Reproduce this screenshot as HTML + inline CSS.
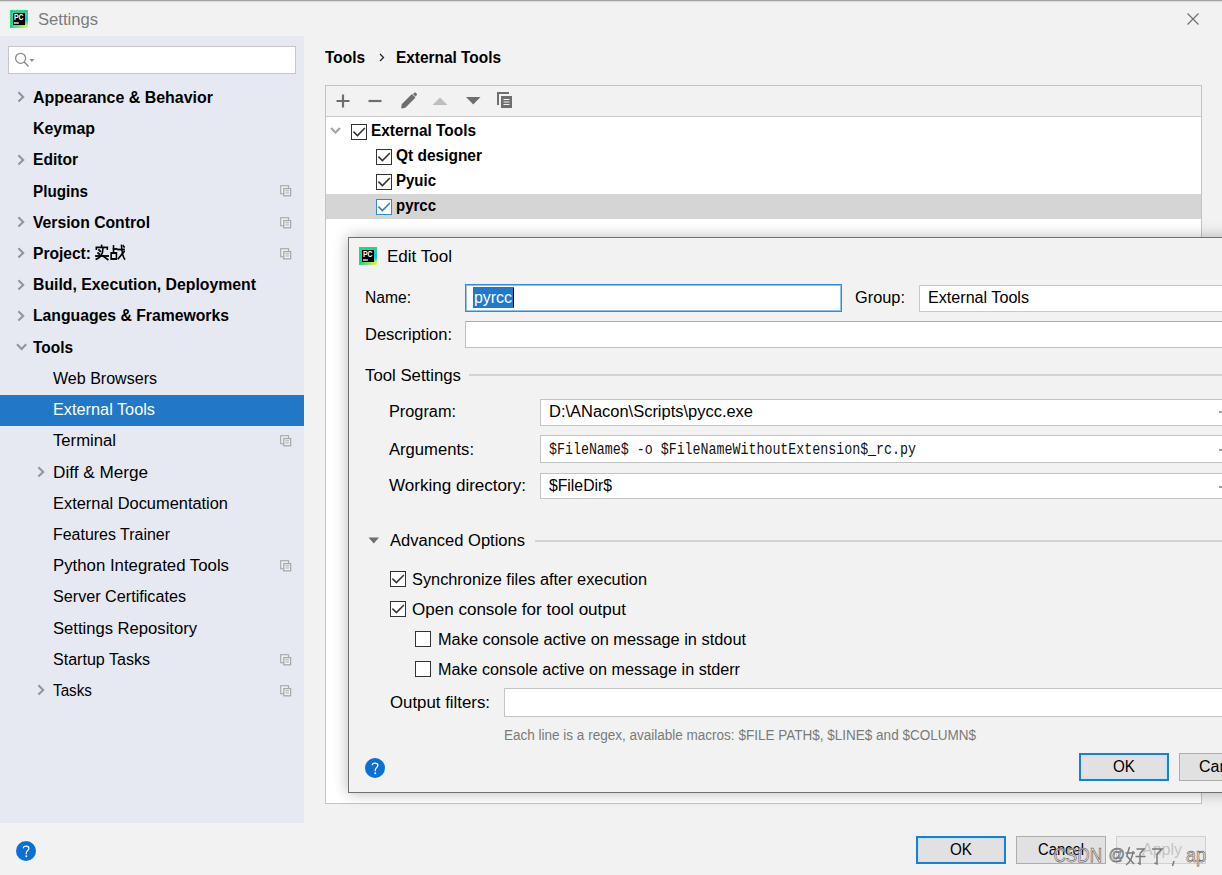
<!DOCTYPE html>
<html><head><meta charset="utf-8"><title>Settings</title>
<style>
html,body{margin:0;padding:0;}
body{width:1222px;height:875px;position:relative;overflow:hidden;background:#f2f2f2;font-family:'Liberation Sans', sans-serif;}
.t{position:absolute;white-space:pre;transform-origin:0 0;}
svg{position:absolute;overflow:visible;}
</style></head><body>
<div style="position:absolute;left:0px;top:0px;width:1222px;height:1px;background:#a3a3a3"></div>
<div style="position:absolute;left:0px;top:1px;width:1222px;height:1px;background:#dcdcdc"></div>
<svg style="left:10px;top:10px" width="18" height="18" viewBox="0 0 18 18">
<defs><linearGradient id="pcg10" x1="0" y1="0" x2="1" y2="1"><stop offset="0" stop-color="#21d789"/><stop offset="0.5" stop-color="#25d38a"/><stop offset="1" stop-color="#fcf84a"/></linearGradient>
<linearGradient id="pcc10" x1="0" y1="0" x2="0" y2="1"><stop offset="0" stop-color="#07c3f2" stop-opacity="0"/><stop offset="0.5" stop-color="#07c3f2"/><stop offset="0.85" stop-color="#07c3f2" stop-opacity="0"/></linearGradient></defs>
<rect x="0" y="0" width="18" height="18" fill="url(#pcg10)"/>
<rect x="14" y="0" width="4" height="18" fill="url(#pcc10)"/>
<rect x="3" y="3" width="12" height="12" fill="#000"/>
<text x="4" y="9.9" font-family="Liberation Sans" font-weight="bold" font-size="8.4" textLength="9.6" lengthAdjust="spacingAndGlyphs" fill="#fff">PC</text>
<rect x="4" y="12.2" width="4.8" height="1.6" fill="#cfcfcf"/>
</svg>
<div class="t" style="left:38px;top:10px;font-size:16px;line-height:20px;font-weight:normal;color:#7c7c7c;font-family:'Liberation Sans', sans-serif;transform:scaleX(1.0378);">Settings</div>
<svg style="left:1187px;top:13px" width="12" height="12"><path d="M0.5 0.5 L11.5 11.5 M11.5 0.5 L0.5 11.5" stroke="#707070" stroke-width="1.2" fill="none"/></svg>
<div style="position:absolute;left:0px;top:36px;width:304px;height:787px;background:#e6e9f2"></div>
<div style="position:absolute;left:8px;top:46px;width:288px;height:28px;background:#fff;border:1px solid #c6c6c6;box-sizing:border-box"></div>
<svg style="left:14px;top:52px" width="22" height="16"><circle cx="6.6" cy="6.3" r="5" stroke="#8a8a8a" stroke-width="1.3" fill="none"/><path d="M10.2 10 L14.6 14.6" stroke="#8a8a8a" stroke-width="1.5"/><path d="M15.5 7 L20.3 7 L17.9 10 Z" fill="#8a8a8a"/></svg>
<div style="position:absolute;left:0px;top:395px;width:304px;height:31px;background:#2178c6"></div>
<div class="t" style="left:33px;top:88px;font-size:16px;line-height:20px;font-weight:bold;color:#000;font-family:'Liberation Sans', sans-serif;transform:scaleX(0.9971);">Appearance &amp; Behavior</div>
<svg style="left:16.5px;top:91.4px" width="8" height="12"><path d="M1.4 1.2 L6.2 5.9 L1.4 10.6" stroke="#959595" stroke-width="2.1" fill="none"/></svg>
<div class="t" style="left:33px;top:119px;font-size:16px;line-height:20px;font-weight:bold;color:#000;font-family:'Liberation Sans', sans-serif;transform:scaleX(0.9960);">Keymap</div>
<div class="t" style="left:33px;top:150px;font-size:16px;line-height:20px;font-weight:bold;color:#000;font-family:'Liberation Sans', sans-serif;transform:scaleX(0.9736);">Editor</div>
<svg style="left:16.5px;top:153.82000000000002px" width="8" height="12"><path d="M1.4 1.2 L6.2 5.9 L1.4 10.6" stroke="#959595" stroke-width="2.1" fill="none"/></svg>
<div class="t" style="left:33px;top:182px;font-size:16px;line-height:20px;font-weight:bold;color:#000;font-family:'Liberation Sans', sans-serif;transform:scaleX(0.9519);">Plugins</div>
<svg style="left:280px;top:185.3px" width="12" height="12"><rect x="0.7" y="0.7" width="7.8" height="8" stroke="#acacac" stroke-width="1.2" fill="#eef0f4"/><rect x="3.8" y="3.6" width="6.8" height="7.2" stroke="#a9a9a9" stroke-width="1.3" fill="#f3f4f7"/><path d="M5.4 5.8 H9 M5.4 8 H9" stroke="#a9a9a9" stroke-width="1"/></svg>
<div class="t" style="left:33px;top:213px;font-size:16px;line-height:20px;font-weight:bold;color:#000;font-family:'Liberation Sans', sans-serif;transform:scaleX(0.9822);">Version Control</div>
<svg style="left:16.5px;top:216.24px" width="8" height="12"><path d="M1.4 1.2 L6.2 5.9 L1.4 10.6" stroke="#959595" stroke-width="2.1" fill="none"/></svg>
<svg style="left:280px;top:216.5px" width="12" height="12"><rect x="0.7" y="0.7" width="7.8" height="8" stroke="#acacac" stroke-width="1.2" fill="#eef0f4"/><rect x="3.8" y="3.6" width="6.8" height="7.2" stroke="#a9a9a9" stroke-width="1.3" fill="#f3f4f7"/><path d="M5.4 5.8 H9 M5.4 8 H9" stroke="#a9a9a9" stroke-width="1"/></svg>
<div class="t" style="left:33px;top:244px;font-size:16px;line-height:20px;font-weight:bold;color:#000;font-family:'Liberation Sans', sans-serif;transform:scaleX(0.9735);">Project:</div>
<svg style="left:16.5px;top:247.45000000000002px" width="8" height="12"><path d="M1.4 1.2 L6.2 5.9 L1.4 10.6" stroke="#959595" stroke-width="2.1" fill="none"/></svg>
<svg style="left:280px;top:247.8px" width="12" height="12"><rect x="0.7" y="0.7" width="7.8" height="8" stroke="#acacac" stroke-width="1.2" fill="#eef0f4"/><rect x="3.8" y="3.6" width="6.8" height="7.2" stroke="#a9a9a9" stroke-width="1.3" fill="#f3f4f7"/><path d="M5.4 5.8 H9 M5.4 8 H9" stroke="#a9a9a9" stroke-width="1"/></svg>
<div class="t" style="left:33px;top:275px;font-size:16px;line-height:20px;font-weight:bold;color:#000;font-family:'Liberation Sans', sans-serif;transform:scaleX(0.9875);">Build, Execution, Deployment</div>
<svg style="left:16.5px;top:278.65999999999997px" width="8" height="12"><path d="M1.4 1.2 L6.2 5.9 L1.4 10.6" stroke="#959595" stroke-width="2.1" fill="none"/></svg>
<div class="t" style="left:33px;top:306px;font-size:16px;line-height:20px;font-weight:bold;color:#000;font-family:'Liberation Sans', sans-serif;transform:scaleX(0.9841);">Languages &amp; Frameworks</div>
<svg style="left:16.5px;top:309.87px" width="8" height="12"><path d="M1.4 1.2 L6.2 5.9 L1.4 10.6" stroke="#959595" stroke-width="2.1" fill="none"/></svg>
<div class="t" style="left:33px;top:338px;font-size:16px;line-height:20px;font-weight:bold;color:#000;font-family:'Liberation Sans', sans-serif;transform:scaleX(0.9642);">Tools</div>
<svg style="left:16px;top:343.08px" width="12" height="8"><path d="M1 1.2 L5.6 5.9 L10.2 1.2" stroke="#959595" stroke-width="2.1" fill="none"/></svg>
<div class="t" style="left:53px;top:369px;font-size:16px;line-height:20px;font-weight:normal;color:#000;font-family:'Liberation Sans', sans-serif;transform:scaleX(1.0026);">Web Browsers</div>
<div class="t" style="left:53px;top:400px;font-size:16px;line-height:20px;font-weight:normal;color:#fff;font-family:'Liberation Sans', sans-serif;transform:scaleX(1.0179);">External Tools</div>
<div class="t" style="left:53px;top:431px;font-size:16px;line-height:20px;font-weight:normal;color:#000;font-family:'Liberation Sans', sans-serif;transform:scaleX(1.0419);">Terminal</div>
<svg style="left:280px;top:435.0px" width="12" height="12"><rect x="0.7" y="0.7" width="7.8" height="8" stroke="#acacac" stroke-width="1.2" fill="#eef0f4"/><rect x="3.8" y="3.6" width="6.8" height="7.2" stroke="#a9a9a9" stroke-width="1.3" fill="#f3f4f7"/><path d="M5.4 5.8 H9 M5.4 8 H9" stroke="#a9a9a9" stroke-width="1"/></svg>
<div class="t" style="left:53px;top:463px;font-size:16px;line-height:20px;font-weight:normal;color:#000;font-family:'Liberation Sans', sans-serif;transform:scaleX(1.0719);">Diff &amp; Merge</div>
<svg style="left:36.5px;top:465.91999999999996px" width="8" height="12"><path d="M1.4 1.2 L6.2 5.9 L1.4 10.6" stroke="#959595" stroke-width="2.1" fill="none"/></svg>
<div class="t" style="left:53px;top:494px;font-size:16px;line-height:20px;font-weight:normal;color:#000;font-family:'Liberation Sans', sans-serif;transform:scaleX(1.0248);">External Documentation</div>
<div class="t" style="left:53px;top:525px;font-size:16px;line-height:20px;font-weight:normal;color:#000;font-family:'Liberation Sans', sans-serif;transform:scaleX(0.9967);">Features Trainer</div>
<div class="t" style="left:53px;top:556px;font-size:16px;line-height:20px;font-weight:normal;color:#000;font-family:'Liberation Sans', sans-serif;transform:scaleX(1.0487);">Python Integrated Tools</div>
<svg style="left:280px;top:559.9px" width="12" height="12"><rect x="0.7" y="0.7" width="7.8" height="8" stroke="#acacac" stroke-width="1.2" fill="#eef0f4"/><rect x="3.8" y="3.6" width="6.8" height="7.2" stroke="#a9a9a9" stroke-width="1.3" fill="#f3f4f7"/><path d="M5.4 5.8 H9 M5.4 8 H9" stroke="#a9a9a9" stroke-width="1"/></svg>
<div class="t" style="left:53px;top:587px;font-size:16px;line-height:20px;font-weight:normal;color:#000;font-family:'Liberation Sans', sans-serif;transform:scaleX(1.0107);">Server Certificates</div>
<div class="t" style="left:53px;top:619px;font-size:16px;line-height:20px;font-weight:normal;color:#000;font-family:'Liberation Sans', sans-serif;transform:scaleX(1.0380);">Settings Repository</div>
<div class="t" style="left:53px;top:650px;font-size:16px;line-height:20px;font-weight:normal;color:#000;font-family:'Liberation Sans', sans-serif;transform:scaleX(1.0037);">Startup Tasks</div>
<svg style="left:280px;top:653.5px" width="12" height="12"><rect x="0.7" y="0.7" width="7.8" height="8" stroke="#acacac" stroke-width="1.2" fill="#eef0f4"/><rect x="3.8" y="3.6" width="6.8" height="7.2" stroke="#a9a9a9" stroke-width="1.3" fill="#f3f4f7"/><path d="M5.4 5.8 H9 M5.4 8 H9" stroke="#a9a9a9" stroke-width="1"/></svg>
<div class="t" style="left:53px;top:681px;font-size:16px;line-height:20px;font-weight:normal;color:#000;font-family:'Liberation Sans', sans-serif;transform:scaleX(0.9534);">Tasks</div>
<svg style="left:36.5px;top:684.39px" width="8" height="12"><path d="M1.4 1.2 L6.2 5.9 L1.4 10.6" stroke="#959595" stroke-width="2.1" fill="none"/></svg>
<svg style="left:280px;top:684.7px" width="12" height="12"><rect x="0.7" y="0.7" width="7.8" height="8" stroke="#acacac" stroke-width="1.2" fill="#eef0f4"/><rect x="3.8" y="3.6" width="6.8" height="7.2" stroke="#a9a9a9" stroke-width="1.3" fill="#f3f4f7"/><path d="M5.4 5.8 H9 M5.4 8 H9" stroke="#a9a9a9" stroke-width="1"/></svg>
<svg style="left:95px;top:245px" width="30" height="15" viewBox="0 0 34 15" preserveAspectRatio="none">
<g stroke="#000" stroke-width="1.8" fill="none" stroke-linecap="square">
<path d="M7.5 0.5 V2"/><path d="M1.5 4.2 V2.4 H14 V4.2"/><path d="M4.5 5 L6 6.3 M3.5 8 L5 9.2"/><path d="M1 11 H15"/><path d="M9 3.5 C9 9 6 12.5 1.5 14.2"/><path d="M9 11 L14.5 14.5"/>
<path d="M21 1 V8"/><path d="M21 4 H24.5"/><path d="M18.3 8 H24.3 V14 H18.3 Z"/><path d="M26 4.5 H33"/><path d="M30 0.5 C30.5 7 31 11 33.5 14"/><path d="M26.5 13.5 L33 6.5"/><path d="M32 0.8 L33 2"/>
</g></svg>
<svg style="left:16px;top:841px" width="20" height="20"><circle cx="10" cy="10" r="10" fill="#0b6fd6"/><path d="M7.3 7.2 C7.3 4.3 12.9 4.3 12.9 7.3 C12.9 9.4 10.3 9.6 10.3 12 V13.2" stroke="#fff" stroke-width="1.3" fill="none"/><circle cx="10.3" cy="15.2" r="0.95" fill="#fff"/></svg>
<div class="t" style="left:325px;top:48px;font-size:16px;line-height:20px;font-weight:bold;color:#000;font-family:'Liberation Sans', sans-serif;transform:scaleX(0.9642);">Tools</div>
<svg style="left:379px;top:53px" width="6" height="9"><path d="M1 1 L4.5 4.5 L1 8" stroke="#222" stroke-width="1.3" fill="none"/></svg>
<div class="t" style="left:396px;top:48px;font-size:16px;line-height:20px;font-weight:bold;color:#000;font-family:'Liberation Sans', sans-serif;transform:scaleX(0.9628);">External Tools</div>
<div style="position:absolute;left:325px;top:85px;width:877px;height:719px;background:#fff;border:1px solid #c4c4c4;box-sizing:border-box"></div>
<div style="position:absolute;left:326px;top:86px;width:875px;height:30px;background:#f2f2f2"></div>
<div style="position:absolute;left:326px;top:116px;width:875px;height:1px;background:#c9c9c9"></div>
<svg style="left:336px;top:94px" width="14" height="14"><path d="M7 0.5 V13.5 M0.5 7 H13.5" stroke="#6e6e6e" stroke-width="2.2"/></svg>
<svg style="left:368px;top:99px" width="14" height="4"><path d="M0.5 2 H13.5" stroke="#6e6e6e" stroke-width="2.2"/></svg>
<svg style="left:400px;top:91px" width="18" height="18"><path d="M2.5 13.5 L12 4 L14.5 6.5 L5 16 L2 16.6 Z" fill="#6e6e6e" stroke="#6e6e6e" stroke-width="1.6" stroke-linejoin="round"/><path d="M13 3 L14.2 1.8 Q15 1 15.8 1.8 L16.7 2.7 Q17.5 3.5 16.7 4.3 L15.5 5.5 Z" fill="#6e6e6e"/></svg>
<svg style="left:432px;top:97px" width="16" height="9"><path d="M0.5 8 L8 0.5 L15.5 8 Z" fill="#bdbdbd"/></svg>
<svg style="left:466px;top:97px" width="15" height="8"><path d="M0 0 H14.5 L7.25 7.5 Z" fill="#6e6e6e"/></svg>
<svg style="left:497px;top:92px" width="16" height="17"><path d="M1 13 V1 H12" stroke="#6e6e6e" stroke-width="2" fill="none"/><rect x="4" y="4" width="11" height="12" fill="#6e6e6e"/><path d="M6.5 7.5 H12.5 M6.5 10 H12.5 M6.5 12.5 H12.5" stroke="#f2f2f2" stroke-width="1.2"/></svg>
<svg style="left:330px;top:127px" width="12" height="8"><path d="M1 1.1 L5.5 5.6 L10 1.1" stroke="#a3a3a3" stroke-width="2.1" fill="none"/></svg>
<div style="position:absolute;left:326px;top:194px;width:875px;height:25px;background:#d5d5d5"></div>
<svg style="left:351px;top:124px" width="16" height="16"><rect x="0.5" y="0.5" width="15" height="15" fill="#fff" stroke="#333" stroke-width="1"/><path d="M2.4 7.6 L6.4 11.6 L13.9 3.9" stroke="#333" stroke-width="1.5" fill="none"/></svg>
<div class="t" style="left:371px;top:121px;font-size:16px;line-height:20px;font-weight:bold;color:#000;font-family:'Liberation Sans', sans-serif;transform:scaleX(0.9628);">External Tools</div>
<svg style="left:376px;top:149px" width="16" height="16"><rect x="0.5" y="0.5" width="15" height="15" fill="#fff" stroke="#333" stroke-width="1"/><path d="M2.4 7.6 L6.4 11.6 L13.9 3.9" stroke="#333" stroke-width="1.5" fill="none"/></svg>
<div class="t" style="left:396px;top:146px;font-size:16px;line-height:20px;font-weight:bold;color:#000;font-family:'Liberation Sans', sans-serif;transform:scaleX(0.9673);">Qt designer</div>
<svg style="left:376px;top:174px" width="16" height="16"><rect x="0.5" y="0.5" width="15" height="15" fill="#fff" stroke="#333" stroke-width="1"/><path d="M2.4 7.6 L6.4 11.6 L13.9 3.9" stroke="#333" stroke-width="1.5" fill="none"/></svg>
<div class="t" style="left:396px;top:171px;font-size:16px;line-height:20px;font-weight:bold;color:#000;font-family:'Liberation Sans', sans-serif;transform:scaleX(0.9370);">Pyuic</div>
<svg style="left:376px;top:199px" width="16" height="16"><rect x="0.5" y="0.5" width="15" height="15" fill="#fff" stroke="#2d8fe0" stroke-width="1"/><path d="M2.4 7.6 L6.4 11.6 L13.9 3.9" stroke="#2d7fd0" stroke-width="1.5" fill="none"/></svg>
<div class="t" style="left:396px;top:196px;font-size:16px;line-height:20px;font-weight:bold;color:#000;font-family:'Liberation Sans', sans-serif;transform:scaleX(0.9367);">pyrcc</div>
<div style="position:absolute;left:348px;top:237px;width:900px;height:556px;background:#f2f2f2;border:1px solid #707070;box-sizing:border-box;box-shadow:0 0 14px rgba(0,0,0,0.28)"></div>
<svg style="left:359px;top:247px" width="18" height="18" viewBox="0 0 18 18">
<defs><linearGradient id="pcg359" x1="0" y1="0" x2="1" y2="1"><stop offset="0" stop-color="#21d789"/><stop offset="0.5" stop-color="#25d38a"/><stop offset="1" stop-color="#fcf84a"/></linearGradient>
<linearGradient id="pcc359" x1="0" y1="0" x2="0" y2="1"><stop offset="0" stop-color="#07c3f2" stop-opacity="0"/><stop offset="0.5" stop-color="#07c3f2"/><stop offset="0.85" stop-color="#07c3f2" stop-opacity="0"/></linearGradient></defs>
<rect x="0" y="0" width="18" height="18" fill="url(#pcg359)"/>
<rect x="14" y="0" width="4" height="18" fill="url(#pcc359)"/>
<rect x="3" y="3" width="12" height="12" fill="#000"/>
<text x="4" y="9.9" font-family="Liberation Sans" font-weight="bold" font-size="8.4" textLength="9.6" lengthAdjust="spacingAndGlyphs" fill="#fff">PC</text>
<rect x="4" y="12.2" width="4.8" height="1.6" fill="#cfcfcf"/>
</svg>
<div class="t" style="left:387px;top:247px;font-size:16px;line-height:20px;font-weight:normal;color:#000;font-family:'Liberation Sans', sans-serif;transform:scaleX(1.0642);">Edit Tool</div>
<div class="t" style="left:365px;top:288px;font-size:16px;line-height:20px;font-weight:normal;color:#000;font-family:'Liberation Sans', sans-serif;transform:scaleX(0.9761);">Name:</div>
<div style="position:absolute;left:465px;top:284px;width:377px;height:28px;background:#fff;border:1px solid #3a88d4;box-shadow:inset 0 0 0 1px #8fc3ef;box-sizing:border-box"></div>
<div style="position:absolute;left:473px;top:287px;width:41px;height:21px;background:#1f79cc"></div>
<div class="t" style="left:474px;top:288px;font-size:16px;line-height:20px;font-weight:normal;color:#fff;font-family:'Liberation Sans', sans-serif;transform:scaleX(0.9939);">pyrcc</div>
<div style="position:absolute;left:513px;top:288px;width:1px;height:19px;background:#000"></div>
<div class="t" style="left:855px;top:288px;font-size:16px;line-height:20px;font-weight:normal;color:#000;font-family:'Liberation Sans', sans-serif;transform:scaleX(1.0220);">Group:</div>
<div style="position:absolute;left:919px;top:285px;width:400px;height:27px;background:#fff;border:1px solid #c8c8c8;box-sizing:border-box"></div>
<div class="t" style="left:928px;top:288px;font-size:16px;line-height:20px;font-weight:normal;color:#000;font-family:'Liberation Sans', sans-serif;transform:scaleX(1.0080);">External Tools</div>
<div class="t" style="left:365px;top:325px;font-size:16px;line-height:20px;font-weight:normal;color:#000;font-family:'Liberation Sans', sans-serif;transform:scaleX(1.0298);">Description:</div>
<div style="position:absolute;left:465px;top:321px;width:800px;height:27px;background:#fff;border:1px solid #c0c0c0;border-top-color:#a8a8a8;box-sizing:border-box"></div>
<div class="t" style="left:365px;top:366px;font-size:16px;line-height:20px;font-weight:normal;color:#000;font-family:'Liberation Sans', sans-serif;transform:scaleX(1.0479);">Tool Settings</div>
<div style="position:absolute;left:469px;top:374px;width:800px;height:2px;background:#d3d3d3"></div>
<div class="t" style="left:389px;top:402px;font-size:16px;line-height:20px;font-weight:normal;color:#000;font-family:'Liberation Sans', sans-serif;transform:scaleX(1.0183);">Program:</div>
<div style="position:absolute;left:540px;top:399px;width:700px;height:27px;background:#fff;border:1px solid #c4c4c4;box-sizing:border-box"></div>
<div class="t" style="left:549px;top:402px;font-size:16px;line-height:20px;font-weight:normal;color:#000;font-family:'Liberation Sans', sans-serif;transform:scaleX(1.0288);">D:\ANacon\Scripts\pycc.exe</div>
<div class="t" style="left:389px;top:440px;font-size:16px;line-height:20px;font-weight:normal;color:#000;font-family:'Liberation Sans', sans-serif;transform:scaleX(1.0390);">Arguments:</div>
<div style="position:absolute;left:540px;top:435px;width:700px;height:28px;background:#fff;border:1px solid #c4c4c4;box-sizing:border-box"></div>
<div class="t" style="left:549px;top:440px;font-size:16px;line-height:20px;font-weight:normal;color:#111;font-family:'Liberation Mono', monospace;transform:scaleX(0.8309);">$FileName$ -o $FileNameWithoutExtension$_rc.py</div>
<div class="t" style="left:389px;top:476px;font-size:16px;line-height:20px;font-weight:normal;color:#000;font-family:'Liberation Sans', sans-serif;transform:scaleX(1.0650);">Working directory:</div>
<div style="position:absolute;left:540px;top:473px;width:700px;height:26px;background:#fff;border:1px solid #c4c4c4;box-sizing:border-box"></div>
<div class="t" style="left:549px;top:476px;font-size:16px;line-height:20px;font-weight:normal;color:#000;font-family:'Liberation Sans', sans-serif;transform:scaleX(0.9841);">$FileDir$</div>
<div style="position:absolute;left:1219px;top:411px;width:3px;height:1.5px;background:#a0a0a0"></div>
<div style="position:absolute;left:1219px;top:449px;width:3px;height:1.5px;background:#a0a0a0"></div>
<div style="position:absolute;left:1219px;top:486px;width:3px;height:1.5px;background:#a0a0a0"></div>
<svg style="left:368px;top:537px" width="12" height="8"><path d="M0.5 0.5 H11 L5.75 6.5 Z" fill="#6e6e6e"/></svg>
<div class="t" style="left:389.6px;top:531px;font-size:16px;line-height:20px;font-weight:normal;color:#000;font-family:'Liberation Sans', sans-serif;transform:scaleX(1.0325);">Advanced Options</div>
<div style="position:absolute;left:535px;top:540px;width:700px;height:2px;background:#d3d3d3"></div>
<svg style="left:390px;top:571px" width="16" height="16"><rect x="0.5" y="0.5" width="15" height="15" fill="#fff" stroke="#333" stroke-width="1"/><path d="M2.4 7.6 L6.4 11.6 L13.9 3.9" stroke="#333" stroke-width="1.5" fill="none"/></svg>
<div class="t" style="left:411.6px;top:570px;font-size:16px;line-height:20px;font-weight:normal;color:#000;font-family:'Liberation Sans', sans-serif;transform:scaleX(1.0202);">Synchronize files after execution</div>
<svg style="left:390px;top:601px" width="16" height="16"><rect x="0.5" y="0.5" width="15" height="15" fill="#fff" stroke="#333" stroke-width="1"/><path d="M2.4 7.6 L6.4 11.6 L13.9 3.9" stroke="#333" stroke-width="1.5" fill="none"/></svg>
<div class="t" style="left:411.6px;top:600px;font-size:16px;line-height:20px;font-weight:normal;color:#000;font-family:'Liberation Sans', sans-serif;transform:scaleX(1.0645);">Open console for tool output</div>
<svg style="left:415px;top:631px" width="16" height="16"><rect x="0.5" y="0.5" width="15" height="15" fill="#fff" stroke="#333" stroke-width="1"/></svg>
<div class="t" style="left:438px;top:630px;font-size:16px;line-height:20px;font-weight:normal;color:#000;font-family:'Liberation Sans', sans-serif;transform:scaleX(1.0216);">Make console active on message in stdout</div>
<svg style="left:415px;top:661px" width="16" height="16"><rect x="0.5" y="0.5" width="15" height="15" fill="#fff" stroke="#333" stroke-width="1"/></svg>
<div class="t" style="left:438px;top:660px;font-size:16px;line-height:20px;font-weight:normal;color:#000;font-family:'Liberation Sans', sans-serif;transform:scaleX(1.0107);">Make console active on message in stderr</div>
<div class="t" style="left:389.6px;top:693px;font-size:16px;line-height:20px;font-weight:normal;color:#000;font-family:'Liberation Sans', sans-serif;transform:scaleX(1.0509);">Output filters:</div>
<div style="position:absolute;left:504px;top:688px;width:800px;height:29px;background:#fff;border:1px solid #c4c4c4;box-sizing:border-box"></div>
<div class="t" style="left:503.5px;top:726px;font-size:14px;line-height:18px;font-weight:normal;color:#7a7a7a;font-family:'Liberation Sans', sans-serif;transform:scaleX(0.9654);">Each line is a regex, available macros: $FILE PATH$, $LINE$ and $COLUMN$</div>
<svg style="left:365px;top:758px" width="20" height="20"><circle cx="10" cy="10" r="10" fill="#0b6fd6"/><path d="M7.3 7.2 C7.3 4.3 12.9 4.3 12.9 7.3 C12.9 9.4 10.3 9.6 10.3 12 V13.2" stroke="#fff" stroke-width="1.3" fill="none"/><circle cx="10.3" cy="15.2" r="0.95" fill="#fff"/></svg>
<div style="position:absolute;left:1079px;top:753px;width:90px;height:28px;background:#e1e1e1;border:2px solid #1a7fd6;box-shadow:inset 0 0 0 1px #c4e2f8;box-sizing:border-box"></div>
<div class="t" style="left:1113px;top:757px;font-size:16px;line-height:20px;font-weight:normal;color:#000;font-family:'Liberation Sans', sans-serif;transform:scaleX(0.9514);">OK</div>
<div style="position:absolute;left:1179px;top:753px;width:100px;height:28px;background:#e1e1e1;border:1px solid #adadad;box-sizing:border-box"></div>
<div class="t" style="left:1199px;top:757px;font-size:16px;line-height:20px;font-weight:normal;color:#000;font-family:'Liberation Sans', sans-serif;">Cancel</div>
<div style="position:absolute;left:916px;top:836px;width:90px;height:28px;background:#e1e1e1;border:2px solid #1a7fd6;box-shadow:inset 0 0 0 1px #c4e2f8;box-sizing:border-box"></div>
<div class="t" style="left:950px;top:840px;font-size:16px;line-height:20px;font-weight:normal;color:#000;font-family:'Liberation Sans', sans-serif;transform:scaleX(0.9514);">OK</div>
<div style="position:absolute;left:1016px;top:836px;width:90px;height:28px;background:#e1e1e1;border:1px solid #adadad;box-sizing:border-box"></div>
<div class="t" style="left:1038px;top:840px;font-size:16px;line-height:20px;font-weight:normal;color:#000;font-family:'Liberation Sans', sans-serif;transform:scaleX(0.9235);">Cancel</div>
<div style="position:absolute;left:1116px;top:836px;width:90px;height:28px;background:#ececec;border:1px solid #d0d0d0;box-sizing:border-box"></div>
<div class="t" style="left:1142px;top:840px;font-size:16px;line-height:20px;font-weight:normal;color:#c4c4c4;font-family:'Liberation Sans', sans-serif;transform:scaleX(0.9992);">Apply</div>
<svg style="left:1050px;top:840px" width="172" height="35">
<g font-family="Liberation Sans" font-size="20" fill="#f2f2f2" fill-opacity="0.7" stroke="#6f6f6f" stroke-width="0.75">
<text x="3.5" y="22" textLength="48.5" lengthAdjust="spacingAndGlyphs">CSDN</text>
<text x="58.5" y="19.5" font-size="17" textLength="16.5" lengthAdjust="spacingAndGlyphs">@</text>
<text x="136" y="22" textLength="20" lengthAdjust="spacingAndGlyphs">ap</text>
</g>
<g fill="none" stroke="#7a7a7a" stroke-width="1.5" stroke-linecap="butt" stroke-linejoin="miter">
<path d="M79.5 7 L76.8 16 L84 24"/><path d="M83.2 11 C82.4 18 80.5 22 76 25"/><path d="M75.5 13 H85"/>
<path d="M86.5 9 H94 L90 13.5"/><path d="M90 13.5 V24 L88 23"/><path d="M85.5 16.5 H95.5"/>
<path d="M102 9 H112 L107 14"/><path d="M107 14 V24 L104.5 23"/>
<path d="M124 21 L122.5 26"/>
</g></svg>
</body></html>
